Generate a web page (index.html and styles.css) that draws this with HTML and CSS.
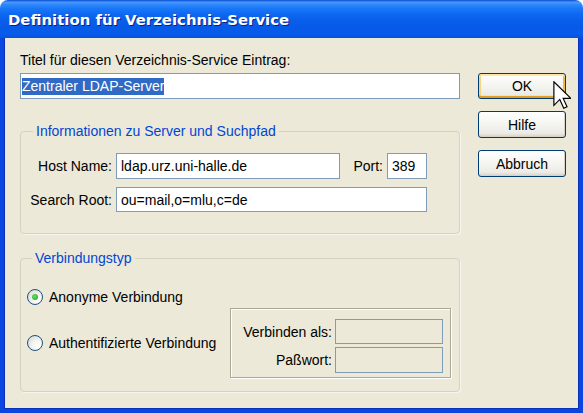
FILE: index.html
```html
<!DOCTYPE html>
<html lang="de">
<head>
<meta charset="utf-8">
<title>Definition für Verzeichnis-Service</title>
<link rel="stylesheet" href="styles.css">
</head>
<body>
<div class="window">
  <div class="titlebar"><span class="title">Definition für Verzeichnis-Service</span></div>
  <div class="frame">
    <div class="main">
      <div class="label-top">Titel für diesen Verzeichnis-Service Eintrag:</div>
      <div class="field field-title"><span class="sel">Zentraler LDAP-Server</span></div>

      <fieldset class="group group-server">
        <legend>Informationen zu Server und Suchpfad</legend>
        <div class="server-grid">
          <span class="lbl">Host Name:</span>
          <div class="field">ldap.urz.uni-halle.de</div>
          <span class="lbl">Port:</span>
          <div class="field">389</div>
          <span class="lbl">Search Root:</span>
          <div class="field span3">ou=mail,o=mlu,c=de</div>
        </div>
      </fieldset>

      <fieldset class="group group-conn">
        <legend>Verbindungstyp</legend>
        <div class="radio-row first"><span class="radio checked"></span><span>Anonyme Verbindung</span></div>
        <div class="conn-row">
          <div class="radio-row"><span class="radio"></span><span>Authentifizierte Verbindung</span></div>
          <div class="auth-box">
            <span class="lbl">Verbinden als:</span>
            <div class="field disabled"></div>
            <span class="lbl">Paßwort:</span>
            <div class="field disabled"></div>
          </div>
        </div>
      </fieldset>
    </div>
    <div class="buttons">
      <div class="btn btn-hot">OK</div>
      <div class="btn">Hilfe</div>
      <div class="btn">Abbruch</div>
    </div>
  </div>
  <svg class="cursor" width="18" height="28" viewBox="0 0 12 19" xmlns="http://www.w3.org/2000/svg">
    <path d="M0.5 0.5 L0.5 16.5 L4.5 12.5 L7.2 18.5 L9.4 17.5 L6.8 11.8 L12 11.8 Z" fill="#fff" stroke="#000" stroke-width="0.8" stroke-linejoin="miter"/>
  </svg>
</div>
</body>
</html>
```
FILE: styles.css
```css
* { box-sizing: border-box; }
html, body { margin: 0; padding: 0; background: #fff; }
body { font-family: "Liberation Sans", Arial, sans-serif; font-size: 14px; color: #000; }

.window {
  position: relative;
  width: 583px;
  height: 413px;
  display: flex;
  flex-direction: column;
  overflow: hidden;
}

.titlebar {
  height: 38px;
  flex: none;
  border-radius: 8px 8px 0 0;
  background: linear-gradient(to bottom, #0a4fd8 0%, #4a98fc 6%, #2f88fc 12%, #1a77f8 22%, #0d68f0 38%, #085ee9 55%, #075ae8 72%, #075ceb 88%, #0652dc 100%);
  display: flex;
  align-items: center;
  padding: 2px 0 0 8px;
}
.title {
  font-family: "DejaVu Sans", Verdana, sans-serif;
  font-weight: bold;
  font-size: 14.9px;
  color: #fff;
  text-shadow: 1px 1px 0 #0a1e8c;
}

.frame {
  flex: 1;
  background: #ece9d8;
  border: 4px solid #0b46e0;
  border-top: none;
  box-shadow: inset 1px 0 0 #0830b8, inset -1px 0 0 #0830b8, inset 0 -1px 0 #0830b8;
  display: flex;
  padding: 14px 0 0 16px;
  gap: 18px;
}

.main { width: 440px; display: flex; flex-direction: column; }

.label-top { line-height: 16px; height: 16px; }

.field {
  height: 26px;
  border: 1px solid #7f9db9;
  background: #fff;
  display: flex;
  align-items: center;
  padding: 0 4px;
  white-space: nowrap;
}
.field-title { margin-top: 5px; padding: 0 1px; }
.sel { background: #316ac5; color: #fff; line-height: 17px; }
.field.disabled { background: #ece9d8; height: 25px; }

.group {
  margin: 0;
  border: 1px solid #d5d2c2;
  border-radius: 4px;
  min-width: 0;
  box-shadow: 1px 1px 0 #f6f5ee;
}
.group legend {
  color: #0046d5;
  line-height: 16px;
  padding: 0 3px;
}

.group-server { margin-top: 24px; padding: 14px 0 21px 8px; }
.group-server legend { margin-left: 4px; }

.server-grid {
  display: grid;
  grid-template-columns: 83px 224px 39px 40px;
  grid-template-rows: 26px 25px;
  column-gap: 4px;
  row-gap: 8px;
  align-items: center;
}
.lbl { text-align: right; white-space: nowrap; }
.server-grid .field { height: 100%; }
.span3 { grid-column: 2 / 5; }

.group-conn { margin-top: 16px; padding: 21px 8px 13px 6px; }
.group-conn legend { margin-left: 5px; }

.radio-row { display: flex; align-items: center; gap: 6px; height: 20px; white-space: nowrap; }
.radio {
  width: 16px; height: 16px;
  border-radius: 50%;
  border: 1px solid #1c5180;
  background: radial-gradient(circle at 70% 70%, #ffffff 0%, #f3f3ef 40%, #d4d2c8 100%);
  display: flex; align-items: center; justify-content: center;
  flex: none;
}
.radio.checked::after {
  content: "";
  width: 6px; height: 6px; border-radius: 50%;
  background: radial-gradient(circle at 40% 40%, #66e066, #21a121);
}

.conn-row {
  display: flex;
  align-items: center;
  justify-content: space-between;
  margin-top: 1px;
}

.auth-box {
  width: 221px;
  height: 70px;
  border: 1px solid #aca899;
  box-shadow: inset 1px 1px 0 #fff, 1px 1px 0 #fff;
  display: grid;
  grid-template-columns: auto 108px;
  grid-template-rows: 25px 26px;
  column-gap: 3px;
  row-gap: 3px;
  justify-content: end;
  align-items: center;
  padding: 10px 7px 0 0;
  align-content: start;
}
.auth-box .field { height: 100%; }

.buttons { display: flex; flex-direction: column; gap: 12px; padding-top: 21px; }
.btn {
  width: 88px;
  height: 27px;
  border: 1px solid #003c74;
  border-radius: 3px;
  background: linear-gradient(to bottom, #ffffff 0%, #f4f4f0 50%, #ecebe6 85%, #d8d0c4 100%);
  display: flex; align-items: center; justify-content: center;
  box-shadow: inset -1px -1px 0 #d6d0c5;
}
.btn-hot {
  height: 26px;
  box-shadow: inset 0 2px 0 #ffe7a2, inset 0 -2px 0 #e89c1e, inset 2px 0 0 #fbd480, inset -2px 0 0 #f1b54a;
}

.cursor { position: absolute; left: 553px; top: 81px; }
```
